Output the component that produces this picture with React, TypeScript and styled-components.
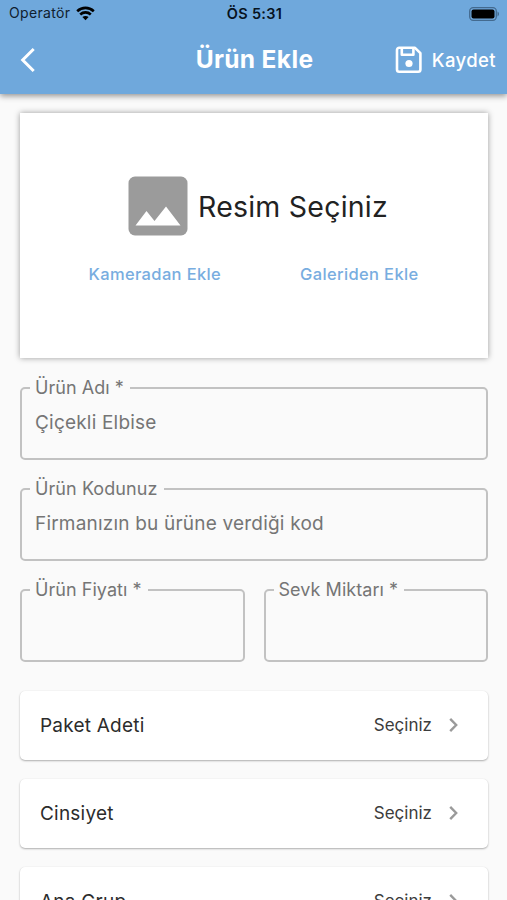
import React from "react";
import styled, { createGlobalStyle } from "styled-components";

const Global = createGlobalStyle`
  * { box-sizing: border-box; }
  html, body { margin: 0; height: 900px; overflow: hidden; background: #fafafa; }
  body { font-family: Inter, "Liberation Sans", sans-serif; color: #222; }
  button { font: inherit; color: inherit; background: none; border: 0; padding: 0; }
`;

const Text = styled.span<{ $size: number; $track?: number; $weight?: number; $color?: string }>`
  font-size: ${(p) => p.$size}px;
  letter-spacing: ${(p) => p.$track ?? 0}px;
  font-weight: ${(p) => p.$weight ?? 400};
  color: ${(p) => p.$color ?? "inherit"};
  line-height: 1.2;
  white-space: nowrap;
`;

const Screen = styled.div`
  width: 507px;
  height: 900px;
  overflow: hidden;
  background: #fafafa;
`;

const Header = styled.header`
  position: relative;
  height: 94px;
  background: #6fa8dc;
  box-shadow: 0 2px 6px rgba(0, 0, 0, 0.42);
`;

const Bar = styled.div<{ $height: number; $pad: string }>`
  display: grid;
  grid-template-columns: 1fr auto 1fr;
  align-items: center;
  height: ${(p) => p.$height}px;
  padding: ${(p) => p.$pad};
`;

const Side = styled.div<{ $end?: boolean; $gap: number }>`
  display: flex;
  align-items: center;
  justify-content: ${(p) => (p.$end ? "flex-end" : "flex-start")};
  gap: ${(p) => p.$gap}px;
`;

const RowValue = styled(Side)`
  padding-bottom: 2px;
`;

const IconButton = styled.button`
  display: flex;
  align-items: center;
  gap: 9px;
  color: #fff;
`;

const BackSlot = styled.span`
  display: flex;
  padding-left: 6px;
`;

const Content = styled.main`
  padding: 19px 19px 0 20px;
`;

const Picker = styled.section`
  display: flex;
  flex-direction: column;
  height: 245px;
  padding-top: 63px;
  background: #fff;
  box-shadow: 0 0 6px rgba(0, 0, 0, 0.38);
`;

const PickerTitle = styled.div`
  display: flex;
  align-items: center;
  height: 60px;
  padding-left: 108px;
  gap: 10px;
`;

const PickerLabel = styled(Text)`
  padding-top: 2px;
`;

const PickerActions = styled.div`
  display: flex;
  gap: 79px;
  padding: 28px 0 0 68.5px;
`;

const Fields = styled.div`
  display: grid;
  grid-template-columns: 1fr 1fr;
  gap: 18px 19px;
  padding-top: 18.500px;
`;

const Field = styled.fieldset<{ $wide?: boolean }>`
  grid-column: ${(p) => (p.$wide ? "1 / -1" : "auto")};
  min-width: 0;
  height: 83px;
  margin: 0;
  padding: 0 13px;
  border: 2px solid #c2c2c2;
  border-radius: 5px;
  color: #757575;
`;

const Legend = styled.legend`
  height: 22px;
  margin-left: -5px;
  padding: 0 6px 0 5px;
  line-height: 22px;
`;

const Hint = styled.div`
  padding-top: 13px;
  line-height: 22px;
`;

const List = styled.div`
  display: flex;
  flex-direction: column;
  gap: 19px;
  padding-top: 29.500px;
`;

const Row = styled.button`
  display: flex;
  align-items: center;
  justify-content: space-between;
  width: 100%;
  height: 69px;
  padding: 2px 29px 0 20px;
  background: #fff;
  border-radius: 5px;
  box-shadow: 0 1px 2px rgba(0, 0, 0, 0.3), 0 0 1px rgba(0, 0, 0, 0.08);
`;

const rows = ["Paket Adeti", "Cinsiyet", "Ana Grup"];

const Wifi = () => (
  <svg width="19" height="15" viewBox="0 0 19 15" fill="none" stroke="#000" strokeWidth="2.6">
    <path d="M1.2 5.2C6 .7 13 .7 17.8 5.2" />
    <path d="M4.2 8.5c3-2.8 7.6-2.8 10.6 0" />
    <path d="M6.4 11.1c1.8-1.6 4.4-1.6 6.2 0L9.5 14.2z" fill="#000" stroke="none" />
  </svg>
);

const Battery = () => (
  <svg width="31" height="14" viewBox="0 0 31 14">
    <rect x=".7" y=".7" width="26.6" height="12.6" rx="3.5" fill="none" stroke="#436a8f" strokeWidth="1.3" />
    <rect x="2.500" y="2.5" width="23" height="9" rx="2" fill="#000" />
    <path d="M28.5 4.6c2 .8 2 4 0 4.8z" fill="#436a8f" />
  </svg>
);

const Back = () => (
  <svg width="16" height="26" viewBox="0 0 16 26" fill="none" stroke="#fff" strokeWidth="3">
    <path d="M14.7 2 3.7 13l11 11" />
  </svg>
);

const Save = () => (
  <svg width="28" height="28" viewBox="0 0 28 28" fill="none" stroke="#fff" strokeWidth="2.600" strokeLinejoin="round">
    <path d="M4.200 1.800h15.800l5.400 5.400v16.400a2.200 2.200 0 0 1-2.200 2.200H4.200A2.200 2.200 0 0 1 2 23.600V4a2.200 2.200 0 0 1 2.200-2.200Z" />
    <path d="M6.800 2v6.800h11.600V2" />
    <circle cx="14" cy="17.500" r="3.600" fill="#fff" stroke="none" />
  </svg>
);

const Picture = () => (
  <svg width="60" height="60" viewBox="0 0 60 60">
    <rect x=".5" y=".5" width="59" height="59" rx="6.5" fill="#9b9b9b" />
    <path d="M7.5 49.5 18.500 35l8 10L38 30.500l14.500 19z" fill="#fff" />
  </svg>
);

const Chevron = () => (
  <svg width="10" height="16" viewBox="0 0 10 16" fill="none" stroke="#9a9a9a" strokeWidth="2.400">
    <path d="m1.200 1.800 6 6.200-6 6.200" />
  </svg>
);

export default function App() {
  return (
    <Screen>
      <Global />
      <Header>
        <Bar $height={27} $pad="0 7px 0 9px">
          <Side $gap={6}>
            <Text $size={14} $track={0.33} $color="#10202e">Operatör</Text>
            <Wifi />
          </Side>
          <Text $size={14.5} $weight={600} $track={0.3} $color="#07131f">ÖS 5:31</Text>
          <Side $end $gap={0}><Battery /></Side>
        </Bar>
        <Bar $height={66} $pad="0 11px 0 13px">
          <Side $gap={0}>
            <IconButton aria-label="Geri"><BackSlot><Back /></BackSlot></IconButton>
          </Side>
          <Text $size={24.5} $weight={700} $track={0.35} $color="#fff">Ürün Ekle</Text>
          <Side $end $gap={0}>
            <IconButton>
              <Save />
              <Text $size={18.5} $weight={500} $track={0.4}>Kaydet</Text>
            </IconButton>
          </Side>
        </Bar>
      </Header>
      <Content>
        <Picker>
          <PickerTitle>
            <Picture />
            <PickerLabel $size={28.5} $track={0.22}>Resim Seçiniz</PickerLabel>
          </PickerTitle>
          <PickerActions>
            <button><Text $size={16.5} $weight={500} $track={0.35} $color="#78ade0">Kameradan Ekle</Text></button>
            <button><Text $size={16.5} $weight={500} $track={0.35} $color="#78ade0">Galeriden Ekle</Text></button>
          </PickerActions>
        </Picker>
        <Fields>
          <Field $wide>
            <Legend><Text $size={18} $track={0.05}>Ürün Adı *</Text></Legend>
            <Hint><Text $size={19} $track={0.2}>Çiçekli Elbise</Text></Hint>
          </Field>
          <Field $wide>
            <Legend><Text $size={18} $track={0.08}>Ürün Kodunuz</Text></Legend>
            <Hint><Text $size={19} $track={0.2}>Firmanızın bu ürüne verdiği kod</Text></Hint>
          </Field>
          <Field><Legend><Text $size={18} $track={0.05}>Ürün Fiyatı *</Text></Legend></Field>
          <Field><Legend><Text $size={18} $track={0.05}>Sevk Miktarı *</Text></Legend></Field>
        </Fields>
        <List>
          {rows.map((label) => (
            <Row key={label}>
              <Text $size={19} $track={0.22} $color="#2c2c2c">{label}</Text>
              <RowValue $gap={17}>
                <Text $size={17} $track={0} $color="#3c3c3c">Seçiniz</Text>
                <Chevron />
              </RowValue>
            </Row>
          ))}
        </List>
      </Content>
    </Screen>
  );
}
